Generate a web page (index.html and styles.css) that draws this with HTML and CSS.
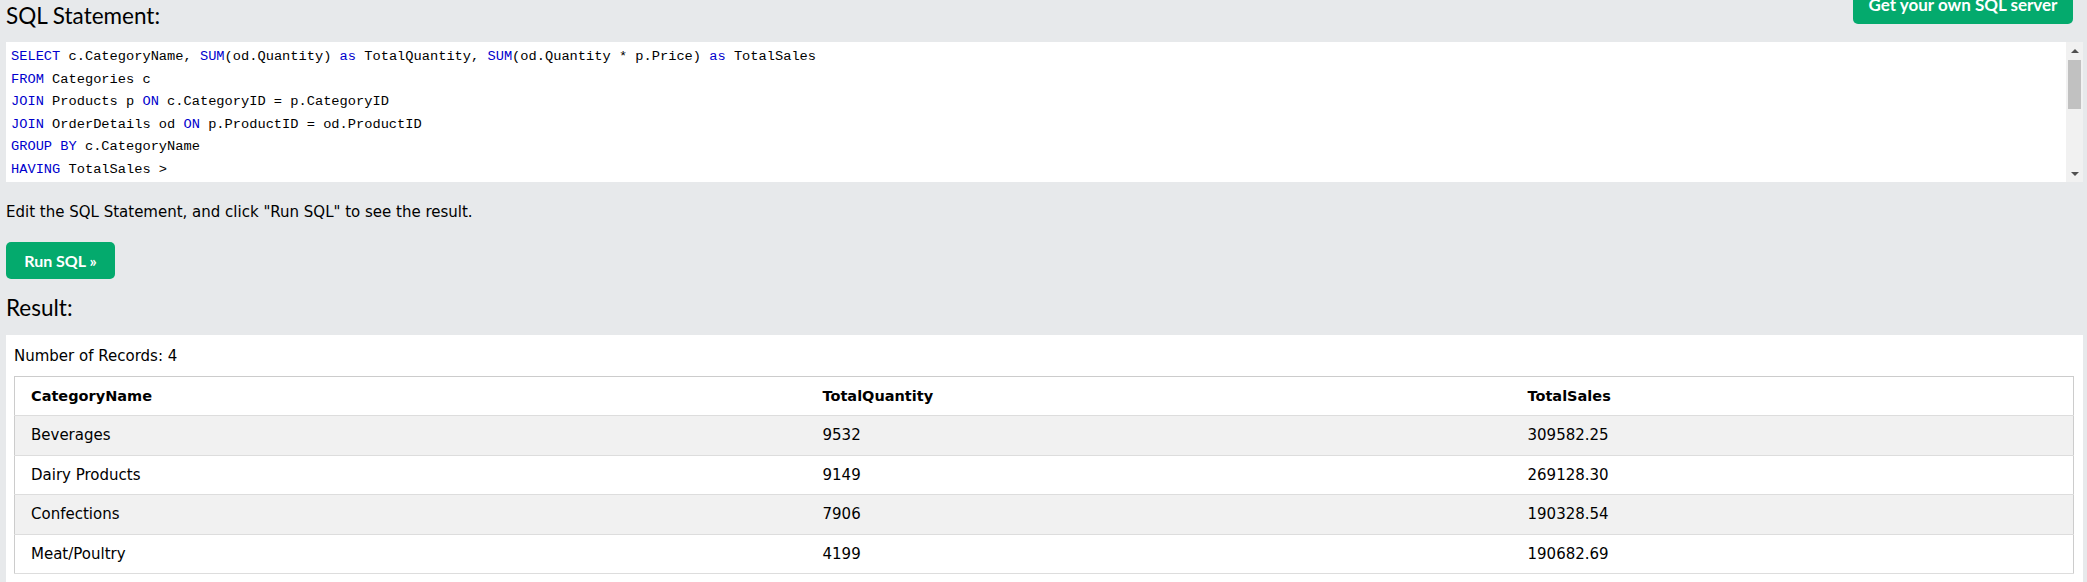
FILE: index.html
```html
<!DOCTYPE html>
<html lang="en">
<head>
<meta charset="utf-8">
<title>SQL Tryit</title>
<link rel="stylesheet" href="styles.css">
</head>
<body>
<div class="page">
  <div class="top">
    <h2 class="title">SQL Statement:</h2>
    <a class="btn btn-server">Get your own SQL server</a>
  </div>
  <div class="editor">
    <div class="code">
      <div class="line"><span class="kw">SELECT</span> c.CategoryName, <span class="kw">SUM</span>(od.Quantity) <span class="kw">as</span> TotalQuantity, <span class="kw">SUM</span>(od.Quantity * p.Price) <span class="kw">as</span> TotalSales</div>
      <div class="line"><span class="kw">FROM</span> Categories c</div>
      <div class="line"><span class="kw">JOIN</span> Products p <span class="kw">ON</span> c.CategoryID = p.CategoryID</div>
      <div class="line"><span class="kw">JOIN</span> OrderDetails od <span class="kw">ON</span> p.ProductID = od.ProductID</div>
      <div class="line"><span class="kw">GROUP BY</span> c.CategoryName</div>
      <div class="line"><span class="kw">HAVING</span> TotalSales &gt;</div>
    </div>
    <div class="scrollbar">
      <div class="sb-btn up"></div>
      <div class="sb-track"><div class="sb-thumb"></div></div>
      <div class="sb-btn down"></div>
    </div>
  </div>
  <p class="hint">Edit the SQL Statement, and click "Run SQL" to see the result.</p>
  <button class="btn btn-run">Run SQL »</button>
  <h2 class="title result-title">Result:</h2>
  <div class="result">
    <div class="count">Number of Records: 4</div>
    <table class="grid">
      <colgroup><col class="c1"><col class="c2"><col></colgroup>
      <tbody>
        <tr><th>CategoryName</th><th>TotalQuantity</th><th>TotalSales</th></tr>
        <tr><td>Beverages</td><td>9532</td><td>309582.25</td></tr>
        <tr><td>Dairy Products</td><td>9149</td><td>269128.30</td></tr>
        <tr><td>Confections</td><td>7906</td><td>190328.54</td></tr>
        <tr><td>Meat/Poultry</td><td>4199</td><td>190682.69</td></tr>
      </tbody>
    </table>
  </div>
</div>
</body>
</html>
```

FILE: styles.css
```css
* { box-sizing: border-box; }
html, body { margin: 0; }
body {
  background: #e7e9eb;
  font-family: "DejaVu Sans", Verdana, sans-serif;
  font-size: 15px;
  color: #000;
  overflow: hidden;
}
.page { padding: 0 4px 0 6px; }
.top {
  display: flex;
  justify-content: space-between;
  align-items: flex-start;
  height: 42px;
}
.title {
  margin: 0;
  padding-top: 1px;
  font-family: Lato, "Open Sans", sans-serif;
  font-weight: 400;
  font-size: 22.5px;
  line-height: 30px;
}
.btn {
  font-family: Lato, "Open Sans", sans-serif;
  font-weight: 700;
  color: #fff;
  background: #04aa6d;
  border: 0;
  border-radius: 5px;
  display: flex;
  align-items: center;
  justify-content: center;
}
.btn-server {
  margin-top: -16px;
  margin-right: 10px;
  width: 220px;
  height: 40px;
  font-size: 17px;
}
.editor {
  display: flex;
  height: 140px;
  background: #fff;
}
.code {
  flex: 1;
  padding: 4px 5px;
  font-family: "Liberation Mono", monospace;
  font-size: 13.7px;
  line-height: 22.5px;
  overflow: hidden;
}
.line { white-space: pre; }
.kw { color: #0000cd; }
.scrollbar {
  width: 17px;
  background: #f1f1f1;
  display: flex;
  flex-direction: column;
}
.sb-btn {
  height: 17px;
  display: flex;
  align-items: center;
  justify-content: center;
}
.sb-btn::before {
  content: "";
  border-left: 4px solid transparent;
  border-right: 4px solid transparent;
}
.up::before { border-bottom: 4px solid #505050; }
.down::before { border-top: 4px solid #505050; }
.sb-track { flex: 1; padding: 1px 2px; }
.sb-thumb { height: 49px; background: #c1c1c1; }
.hint {
  margin: 19px 0 0;
  line-height: 22.5px;
}
.btn-run {
  margin-top: 18px;
  width: 109px;
  height: 37px;
  font-size: 16px;
}
.result-title {
  margin-top: 14px;
  margin-bottom: 12px;
  padding-top: 0;
}
.result {
  background: #fff;
  padding: 10.5px 9px 20px 8px;
}
.count { line-height: 22.5px; }
.grid {
  margin-top: 8px;
  width: 100%;
  border-collapse: collapse;
  border: 1px solid #ccc;
  table-layout: fixed;
}
.c1 { width: 800px; }
.c2 { width: 705px; }
.grid th, .grid td {
  padding: 8px;
  text-align: left;
  line-height: 22.5px;
  vertical-align: top;
}
.grid th { font-size: 14.5px; }
.grid th:first-child, .grid td:first-child { padding-left: 16px; }
.grid tr { border-bottom: 1px solid #ddd; }
.grid tr:nth-child(even) { background: #f1f1f1; }
```
